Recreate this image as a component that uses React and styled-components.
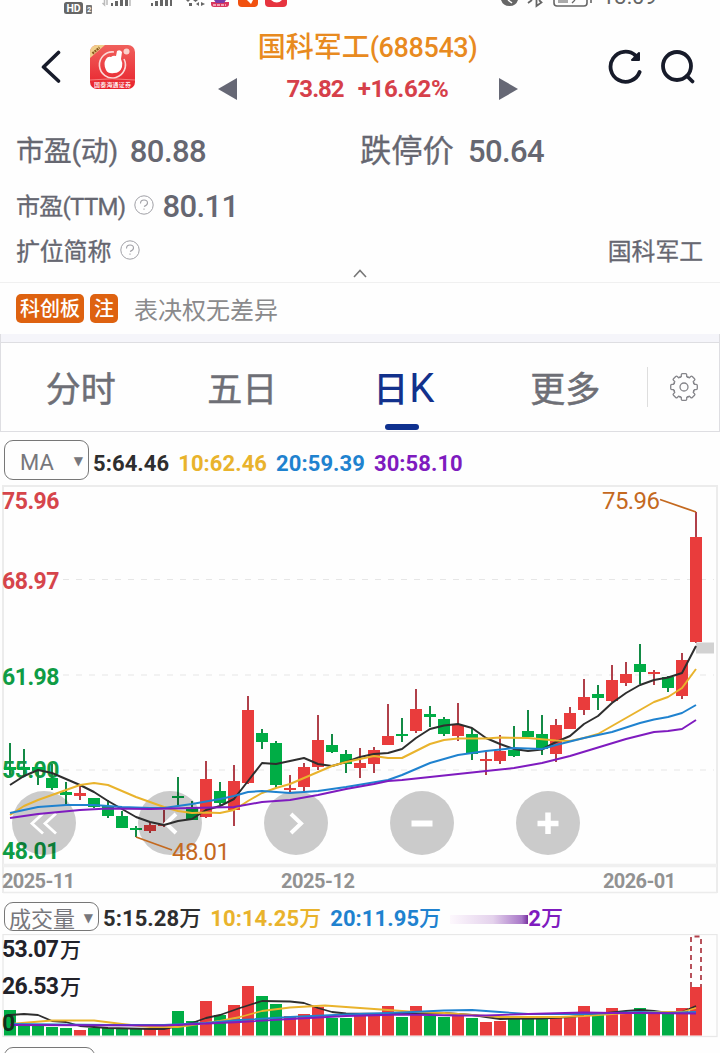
import React from 'react';
import styled, { createGlobalStyle } from 'styled-components';

const RED = '#e93c3c';
const GREEN = '#00ad45';
const WICK_RED = '#b0404a';
const WICK_GREEN = '#138a45';
const MA_COLORS = ['#2e2e2e', '#e9b32c', '#1f82cf', '#7f1bbf'];

// [high, bodyTop, bodyBottom, low, up, volumeTop]
const candles = [
  [743, 767, 770, 775, 0, 1010], [749, 767, 770, 776, 0, 1026], [767, 767, 771, 785, 0, 1026],
  [764, 778, 788, 790, 0, 1027], [782, 792, 795, 805, 0, 1028], [785, 793, 796, 800, 1, 1030],
  [798, 798, 807, 808, 0, 1028], [800, 806, 816, 818, 0, 1028], [811, 816, 828, 828, 0, 1028],
  [826, 828, 830, 837, 0, 1028], [822, 825, 831, 833, 1, 1029], [810, 824, 826, 827, 1, 1028],
  [777, 796, 798, 805, 0, 1011], [801, 807, 820, 820, 0, 1021], [761, 779, 817, 818, 1, 1001],
  [782, 791, 803, 805, 0, 1015], [765, 781, 810, 826, 1, 1005], [696, 710, 783, 784, 1, 986],
  [729, 733, 742, 749, 0, 996], [741, 743, 785, 788, 0, 1004], [775, 788, 790, 792, 1, 1016],
  [763, 767, 787, 791, 1, 1014], [715, 740, 767, 770, 1, 1007], [734, 745, 752, 753, 0, 1018],
  [750, 754, 764, 773, 0, 1018], [748, 763, 768, 778, 1, 1016], [747, 750, 764, 773, 1, 1016],
  [704, 736, 745, 745, 1, 1006], [718, 734, 736, 742, 0, 1017], [689, 709, 731, 733, 1, 1006],
  [706, 714, 717, 727, 0, 1016], [717, 719, 734, 736, 0, 1017], [703, 725, 736, 741, 1, 1015],
  [728, 734, 754, 760, 0, 1018], [752, 759, 761, 775, 1, 1022], [735, 751, 761, 764, 1, 1021],
  [726, 750, 756, 757, 0, 1018], [710, 731, 737, 737, 0, 1018], [715, 734, 749, 755, 0, 1018],
  [719, 725, 754, 762, 1, 1018], [707, 713, 729, 729, 1, 1016], [679, 697, 710, 715, 1, 1006],
  [685, 694, 698, 710, 0, 1014], [665, 680, 701, 702, 1, 1008], [662, 674, 683, 686, 1, 1013],
  [644, 664, 672, 684, 0, 1008], [670, 672, 674, 685, 1, 1013], [676, 677, 688, 692, 0, 1014],
  [653, 660, 696, 699, 1, 1008], [512, 537, 642, 643, 1, 987],
];

const priceLines = [
  '10,785 24,776 38,770 52,773 66,779 80,785 94,792 108,801 122,809 136,817 150,822 164,825 178,821 192,819 206,810 220,806 234,799 248,781 262,763 276,764 290,761 304,758 318,764 332,766 346,762 360,757 374,754 388,753 402,749 416,738 430,729 444,725.5 458,724 472,728 486,738 500,744 514,749 528,751 542,749.5 556,742 570,736 584,724 598,716 612,703 626,693 640,685 654,680 668,677.5 682,673 696,646',
  '10,815 24,806 38,800 52,795 66,790 80,785 94,783 108,785 122,791 136,797 150,802 164,807 178,811 192,813 206,812.5 220,813 234,810 248,801 262,793 276,788 290,784 304,778 318,772 332,766 346,762 360,759 374,756 388,758 402,758 416,751 430,744 444,740 458,738.5 486,738.5 500,737.5 528,738 556,740.5 570,741 584,738 598,734 612,726 626,718 640,710 654,702 668,697 682,688 696,669',
  '10,813 38,807 66,805 94,805 122,807 150,808 164,808 192,804 220,799 234,796 248,792 262,791 290,793 318,791 332,789 346,787 388,780 402,775 430,763 458,755 486,751 514,748 542,749 556,745 584,738 612,732 640,723 654,719.5 668,717 682,713 696,705',
  '10,818 38,814 80,810 108,808.5 150,809 192,808 234,807 262,802 290,800 318,795 346,789 374,784 388,781 402,780 430,777 458,774 486,771 514,768 542,763 570,756 598,747.5 626,739 654,732 668,731 682,729 696,720',
];

const volumeLines = [
  '10,1015 24,1014 38,1015 52,1021 66,1022 80,1026 108,1028 150,1029 164,1029 178,1026 192,1023 206,1018 220,1015 240,1008 262,1001 290,1001.5 304,1003 318,1008 332,1012 346,1013.5 388,1014 416,1013 444,1013 472,1015 486,1017 500,1019 542,1018.5 570,1017 598,1014 626,1011 640,1010 654,1011 668,1013 682,1012 696,1006',
  '10,1024 52,1020.5 94,1020.5 122,1024 150,1027 178,1027 206,1023 220,1021 240,1017 262,1011 290,1007.5 325,1005.5 360,1008 388,1010 416,1012 444,1013 472,1015 500,1017 560,1017 584,1016 612,1014 640,1012 682,1012 696,1008',
  '10,1024 108,1025 164,1025 206,1023 240,1020 290,1017 346,1014.5 402,1012.5 444,1010.5 472,1010 500,1012 528,1014 584,1014 640,1012 668,1013 696,1012',
  '10,1025 164,1025.5 240,1022 290,1019 346,1016 402,1014.5 458,1015.5 486,1015.5 528,1014 584,1012.5 612,1013 640,1013 696,1013.5',
];

const xOf = (i) => 10 + i * 14;

const StatusIcons = () => (
  <svg width="720" height="18" viewBox="0 0 720 18">
    <rect x="64" y="2" width="19" height="12" rx="2.5" fill="#666" />
    <text x="66.5" y="12" fontSize="10.5" fontWeight="700" fill="#fff" fontFamily="Roboto, sans-serif" textLength="14">HD</text>
    <rect x="86" y="5" width="6" height="9" rx="1" fill="#777" />
    <text x="87.2" y="12.2" fontSize="7" fontWeight="700" fill="#fff" fontFamily="Roboto, sans-serif">2</text>
    <g fill="#666">
      <rect x="111" y="3" width="2" height="3" />
      <rect x="115" y="1" width="3" height="5" />
      <rect x="120" y="0" width="3" height="6" />
      <rect x="125" y="0" width="3" height="6" />
      <rect x="151" y="3" width="2" height="3" />
      <rect x="155" y="1" width="3" height="5" />
      <rect x="160" y="0" width="3" height="6" />
      <rect x="165" y="0" width="3" height="6" />
      <rect x="170" y="0" width="2" height="6" />
      <path d="M186 0h4l-2 2zM193 0h5l-2.500 2zM189 3h3v3h-3zM196 4l3-2v4zM201 2l4 2-4 2z" />
    </g>
    <path d="M102.500 3l2 2V0M107 0v5M130 0v6" stroke="#bbb" strokeWidth="1.500" fill="none" />
    <path d="M211 2h18v2q0 3-3 3h-12q-3 0-3-3z" fill="#d9365e" />
    <path d="M214 0h12l-2 3h-8z" fill="#7c3aa6" />
    <path d="M213 5h13" stroke="#f8c2cf" strokeWidth="1.500" strokeDasharray="3 1" />
    <path d="M238 0h20v3q0 4-4 4h-12q-4 0-4-4z" fill="#f1510f" />
    <path d="M247 0h6l-2 4z" fill="#fff" />
    <path d="M265 0h22v3q0 4-4 4h-14q-4 0-4-4z" fill="#e6343f" />
    <path d="M271 0h11q-5 5-11 0z" fill="#fff" />
    <path d="M501 0h17q-2 6-8.500 6T501 0z" fill="#666" />
    <path d="M508 0l4 3" stroke="#fff" strokeWidth="1.500" />
    <path d="M528 3l4-3M536.500 0V6l5-3.500-2.500-2.500" stroke="#666" strokeWidth="1.800" fill="none" />
    <path d="M554 0v3q0 3 3 3h27q3 0 3-3V0M591 0v3" stroke="#666" strokeWidth="1.600" fill="none" />
    <path d="M558 0h10v3h-10z" fill="#aaa" />
    <path d="M572 3l3-3" stroke="#666" strokeWidth="1.200" />
  </svg>
);

const BrokerLogo = () => (
  <svg width="45" height="45" viewBox="0 0 45 45">
    <defs>
      <clipPath id="logoClip"><rect width="45" height="44" rx="7" /></clipPath>
      <linearGradient id="logoFill" x1="0" y1="0" x2="0" y2="1">
        <stop offset="0" stopColor="#f0605c" />
        <stop offset="1" stopColor="#e8202b" />
      </linearGradient>
    </defs>
    <g clipPath="url(#logoClip)">
      <rect width="45" height="45" fill="url(#logoFill)" />
      <path d="M0 0h15L0 13z" fill="#f0cf8b" />
      <path d="M2.500 8.500l7-6" stroke="#8a5a20" strokeWidth="2.400" strokeDasharray="2 .8" />
      <path d="M24 7A13 13 0 1 0 34 14" fill="none" stroke="#fbd8d6" strokeWidth="1.600" />
      <path d="M16 14q2-3 5-2 2-2 5-1l1-5q3-2 5 1l-1 7q2 4 1 8-2 6-8 6-6 1-8-3-3-6 0-11z" fill="#fff" />
      <circle cx="36.500" cy="6.500" r="3" fill="#fbd1cb" />
      <path d="M0 35q22-2.500 45 0" stroke="#f7938f" strokeWidth=".8" fill="none" />
      <text x="4" y="41.500" fontSize="6" fontWeight="500" fill="#fff" fontFamily="'Noto Sans CJK SC', sans-serif" textLength="37">国泰海通证券</text>
    </g>
  </svg>
);

const HelpIcon = () => (
  <svg width="20" height="20" viewBox="0 0 20 20" fill="none" stroke="#a0a0a6">
    <circle cx="10" cy="10" r="9.200" />
    <path d="M6.500 8.500q0-3.500 3.500-3.500t3.500 3q0 2-3.500 3.500M10 13.400v1.300" strokeWidth="1.100" />
  </svg>
);

const gearTeeth = [0, 45, 90, 135, 180, 225, 270, 315];

const GearIcon = () => (
  <svg width="30" height="30" viewBox="-15 -15 30 30" fill="none" stroke="#85858a" strokeWidth="1.300" strokeLinejoin="round" strokeLinecap="round">
    {gearTeeth.map((angle) => (
      <path key={angle} transform={`rotate(${angle})`} d="M-4.300-9.600L-2.700-10.300V-12.200Q-2.700-13.300-1.600-13.300H1.600Q2.700-13.300 2.700-12.200V-10.300L4.300-9.600" />
    ))}
    {gearTeeth.map((angle) => (
      <path key={angle} transform={`rotate(${angle})`} d="M4.300-9.600Q4-9.700 3.750-9.830" />
    ))}
    <circle r="4" />
  </svg>
);

const RoundButton = ({ x, children }) => (
  <g transform={`translate(${x} 823)`}>
    <circle r="32" fill="#000" fillOpacity=".2" />
    <g fill="none" stroke="#fff" strokeWidth="4">{children}</g>
  </g>
);

const PriceChart = () => (
  <ChartSvg width="720" height="409" viewBox="0 485 720 409">
    <path d="M3 893V486H717V893" fill="none" stroke="#ececec" strokeWidth="2" />
    <path d="M3 865.500H717" stroke="#f0f0f0" strokeWidth="3.500" />
    <path d="M3 892.500H717" stroke="#ececec" strokeWidth="1.500" />
    <path d="M63 579.500H714M63 675H714M63 770H714" stroke="#e6e6e6" strokeDasharray="6 7" />
    <AxisText x="2" y="508.500" fill="#d6454b" textLength="57.500">75.96</AxisText>
    <AxisText x="2" y="589" fill="#d6454b" textLength="57.500">68.97</AxisText>
    <AxisText x="2" y="684.500" fill="#0f9c45" textLength="57.500">61.98</AxisText>
    <AxisText x="2" y="778" fill="#0f9c45" textLength="57.500">55.00</AxisText>
    <AxisText x="2" y="859" fill="#0f9c45" textLength="57.500">48.01</AxisText>
    {candles.map(([high, top, bottom, low, up], i) => (
      <g key={i}>
        <path d={`M${xOf(i)} ${high}V${low}`} stroke={up ? WICK_RED : WICK_GREEN} strokeWidth="2" />
        <rect x={xOf(i) - 6} y={top} width="12" height={bottom - top} fill={up ? RED : GREEN} />
      </g>
    ))}
    <rect x="696" y="642.500" width="18" height="11" fill="#d2d2d2" />
    <RoundButton x={44}><path d="M-1-9.500L-12 0.500-1 10.500M12-9.500L1 0.500 12 10.500" strokeWidth="2.800" /></RoundButton>
    <RoundButton x={170}><path d="M6-9L-4 0.500 6 10" /></RoundButton>
    <RoundButton x={296}><path d="M-5-9L5 0.500-5 10" /></RoundButton>
    <RoundButton x={422}><path d="M-10.500 0.500H10.500" strokeWidth="6" /></RoundButton>
    <RoundButton x={548}><path d="M-10.500 0.500H10.500M0-10.500V11" strokeWidth="5.500" /></RoundButton>
    {priceLines.map((points, i) => (
      <polyline key={i} points={points} fill="none" stroke={MA_COLORS[i]} strokeWidth="2" strokeLinejoin="round" />
    ))}
    <path d="M660 499.500L696 512M136 837L172 850" stroke="#c4691f" strokeWidth="1.800" />
    <PeakText x="602" y="509" textLength="58">75.96</PeakText>
    <PeakText x="172" y="859.500" textLength="58">48.01</PeakText>
    <DateText x="2" y="888" textLength="73">2025-11</DateText>
    <DateText x="281" y="888" textLength="74">2025-12</DateText>
    <DateText x="603" y="888" textLength="73">2026-01</DateText>
  </ChartSvg>
);

const VolumeChart = () => (
  <ChartSvg width="720" height="104" viewBox="0 934 720 104">
    <rect x="3" y="934.500" width="714" height="102" fill="none" stroke="#e8e8e8" strokeWidth="1.300" />
    {candles.map((c, i) => (
      <rect key={i} x={xOf(i) - 6} y={c[5]} width="12" height={1035.5 - c[5]} fill={c[4] ? RED : GREEN} />
    ))}
    <path d="M691 987V936.500H701V987" fill="none" stroke="#b0404a" strokeWidth="1.800" strokeDasharray="5 4" />
    {volumeLines.map((points, i) => (
      <polyline key={i} points={points} fill="none" stroke={MA_COLORS[i]} strokeWidth="1.800" strokeLinejoin="round" />
    ))}
    <AxisText x="2" y="957" fill="#22222a" textLength="57">53.07</AxisText>
    <AxisText x="2" y="994" fill="#22222a" textLength="57">26.53</AxisText>
    <UnitText x="60" y="957">万</UnitText>
    <UnitText x="60" y="994">万</UnitText>
    <AxisText x="2" y="1031" fill="#10301c">0</AxisText>
  </ChartSvg>
);

const App = () => (
  <Page>
    <GlobalStyle />
    <StatusBar>
      <StatusIcons />
      <Clock>13:09</Clock>
    </StatusBar>

    <Header>
      <HeaderSide>
        <svg width="20" height="34" viewBox="0 0 20 34" fill="none" stroke="#171b2a" strokeWidth="3.600" strokeLinecap="round" strokeLinejoin="round">
          <path d="M17.500 2.500L2.500 17 17.500 31" />
        </svg>
        <BrokerLogo />
      </HeaderSide>
      <StockPicker>
        <svg width="19" height="22" viewBox="0 0 19 22"><path d="M0 11L19 0V22Z" fill="#666875" /></svg>
        <StockInfo>
          <StockName>国科军工<b>(688543)</b></StockName>
          <StockPrice><Price>73.82</Price><Change>+16.62%</Change></StockPrice>
        </StockInfo>
        <svg width="19" height="22" viewBox="0 0 19 22"><path d="M19 11L0 0V22Z" fill="#666875" /></svg>
      </StockPicker>
      <HeaderActions>
        <svg width="36" height="36" viewBox="0 0 36 36" fill="none" stroke="#171b2a" strokeWidth="3.800" strokeLinecap="round">
          <path d="M31.600 23A15 15 0 1 1 27.500 6.500" />
          <path d="M31 4v7h-7z" fill="#171b2a" strokeWidth="2" strokeLinejoin="round" />
        </svg>
        <svg width="36" height="36" viewBox="0 0 36 36" fill="none" stroke="#171b2a" strokeWidth="3.800" strokeLinecap="round">
          <circle cx="17" cy="17" r="14" />
          <path d="M27 27L32.500 32.500" />
        </svg>
      </HeaderActions>
    </Header>

    <Quotes>
      <QuoteRow $height={56}>
        <QuoteCell>
          <QuoteLabel $size={28} $spacing={-0.3}>市盈(动)</QuoteLabel>
          <QuoteValue $gap={12}>80.88</QuoteValue>
        </QuoteCell>
        <QuoteCell>
          <QuoteLabel $size={31.3}>跌停价</QuoteLabel>
          <QuoteValue $gap={14}>50.64</QuoteValue>
        </QuoteCell>
      </QuoteRow>
      <QuoteRow $height={54}>
        <QuoteCell>
          <QuoteLabel $size={24} $spacing={-0.7}>市盈(TTM)</QuoteLabel>
          <HelpIcon />
          <QuoteValue $gap={8}>80.11</QuoteValue>
        </QuoteCell>
      </QuoteRow>
      <QuoteRow $height={36}>
        <QuoteCell>
          <QuoteLabel $size={24} $spacing={-0.2}>扩位简称</QuoteLabel>
          <HelpIcon />
        </QuoteCell>
        <FullName>国科军工</FullName>
      </QuoteRow>
      <Collapse>
        <svg width="14" height="9" viewBox="0 0 14 9"><path d="M1 8L7 1.500 13 8" fill="none" stroke="#777" strokeWidth="1.600" /></svg>
      </Collapse>
    </Quotes>

    <TagRow>
      <Tag>科创板</Tag>
      <Tag>注</Tag>
      <TagNote>表决权无差异</TagNote>
    </TagRow>

    <Tabs>
      <Tab>分时</Tab>
      <Tab>五日</Tab>
      <Tab $active>日<b>K</b></Tab>
      <Tab>更多</Tab>
      <Settings><GearIcon /></Settings>
    </Tabs>

    <IndicatorRow $height={53}>
      <Select $width={85} $height={40} $pad={15}>MA<Arrow>▼</Arrow></Select>
      <Averages $top={10}>
        <Average $color={MA_COLORS[0]}>5:64.46</Average>
        <Average $color={MA_COLORS[1]}>10:62.46</Average>
        <Average $color={MA_COLORS[2]}>20:59.39</Average>
        <Average $color={MA_COLORS[3]}>30:58.10</Average>
      </Averages>
    </IndicatorRow>
    <PriceChart />

    <IndicatorRow $height={40}>
      <Select $width={95} $height={29} $pad={4}>成交量<Arrow>▼</Arrow></Select>
      <Averages $top={3}>
        <Average $color={MA_COLORS[0]}>5:15.28<i>万</i></Average>
        <Average $color={MA_COLORS[1]}>10:14.25<i>万</i></Average>
        <Average $color={MA_COLORS[2]}>20:11.95<i>万</i></Average>
        <Smudge />
        <Average $color={MA_COLORS[3]}>2<i>万</i></Average>
      </Averages>
    </IndicatorRow>
    <VolumeChart />
    <NextPanel>
      <Select $width={91} $height={40} $pad={15} />
    </NextPanel>
  </Page>
);

// --- STYLES ---

const GlobalStyle = createGlobalStyle`
  * {
    box-sizing: border-box;
  }
  body {
    margin: 0;
    background: #fff;
  }
  svg {
    display: block;
    flex-shrink: 0;
  }
`;

const Page = styled.div`
  width: 720px;
  height: 1053px;
  overflow: hidden;
  background: #fefefe;
  font-family: Roboto, 'Noto Sans CJK SC', sans-serif;
  color: #666771;
`;

const StatusBar = styled.div`
  position: relative;
  height: 20px;
  overflow: hidden;
`;

const Clock = styled.span`
  position: absolute;
  left: 602px;
  top: -15px;
  font-size: 22px;
  line-height: 24px;
  color: #666;
`;

const Header = styled.header`
  display: flex;
  justify-content: space-between;
  height: 104px;
  padding: 0 24px 0 41px;
`;

const HeaderSide = styled.div`
  display: flex;
  align-items: center;
  gap: 29px;
  height: 94px;
`;

const StockPicker = styled.div`
  display: flex;
  align-items: flex-end;
  justify-content: space-between;
  width: 300px;
  height: 80px;
  margin-left: -8px;
`;

const StockInfo = styled.div`
  display: flex;
  flex-direction: column;
  align-items: center;
  height: 67px;
  margin: 0 -10px;
  white-space: nowrap;
`;

const StockName = styled.div`
  font-size: 28px;
  line-height: 30px;
  font-weight: 500;
  color: #e88a20;

  b {
    font-weight: 500;
    font-size: 27px;
    letter-spacing: -0.4px;
  }
`;

const StockPrice = styled.div`
  display: flex;
  gap: 14px;
  margin-top: 12px;
  font-size: 24px;
  line-height: 28px;
  font-weight: 700;
  color: #d6404a;
`;

const Price = styled.span`
  letter-spacing: -1px;
`;

const Change = styled.span`
  letter-spacing: -0.3px;
`;

const HeaderActions = styled.div`
  display: flex;
  align-items: center;
  gap: 16px;
  height: 94px;
`;

const Quotes = styled.section`
  height: 159px;
  border-bottom: 1px solid #f0f0f0;
`;

const QuoteRow = styled.div`
  display: grid;
  grid-template-columns: 344px 1fr;
  align-items: center;
  height: ${(p) => p.$height}px;
  padding: 0 17px 0 16px;
`;

const QuoteCell = styled.div`
  display: flex;
  align-items: center;

  svg {
    margin: -5px 0 0 9px;
  }
`;

const QuoteLabel = styled.span`
  font-size: ${(p) => p.$size}px;
  line-height: 36px;
  letter-spacing: ${(p) => p.$spacing || 0}px;
  -webkit-text-stroke: 0.3px;
`;

const QuoteValue = styled.span`
  margin-left: ${(p) => p.$gap}px;
  font-size: 31px;
  line-height: 36px;
  font-weight: 500;
  letter-spacing: -0.6px;
`;

const FullName = styled.span`
  justify-self: end;
  font-size: 23.8px;
  line-height: 36px;
  -webkit-text-stroke: 0.3px;
`;

const Collapse = styled.div`
  display: flex;
  justify-content: center;
  margin-top: -1px;
`;

const TagRow = styled.div`
  display: flex;
  align-items: center;
  gap: 6px;
  height: 51px;
  padding: 0 16px;
`;

const Tag = styled.span`
  height: 29px;
  padding: 0 4px;
  border-radius: 5px;
  background: #de6210;
  color: #fff;
  font-size: 20px;
  line-height: 31px;
  font-weight: 500;
`;

const TagNote = styled.span`
  margin: 4px 0 0 10px;
  font-size: 24px;
  line-height: 36px;
  color: #8a8a8c;
`;

const Tabs = styled.nav`
  display: flex;
  height: 98px;
  padding-top: 5px;
  border: 1px solid #dedee2;
  border-top: 0;
  box-shadow: inset 0 8px #f5f5fa, inset 0 9px #dedee2;
`;

const Tab = styled.div`
  position: relative;
  width: 161.500px;
  padding: 8px 2px 0 0;
  text-align: center;
  font-size: 35px;
  line-height: 88px;
  font-weight: ${(p) => (p.$active ? 500 : 400)};
  color: ${(p) => (p.$active ? '#12318c' : '#6e6f76')};
  -webkit-text-stroke: ${(p) => (p.$active ? 0 : 0.5)}px;

  b {
    margin-left: 1px;
    font-size: 40px;
    line-height: 40px;
    font-weight: 400;
  }

  &::after {
    content: '';
    display: ${(p) => (p.$active ? 'block' : 'none')};
    position: absolute;
    left: 61px;
    bottom: 1px;
    width: 34px;
    height: 6px;
    border-radius: 3px;
    background: #0f318f;
  }
`;

const Settings = styled.div`
  display: flex;
  align-items: center;
  justify-content: center;
  flex: 1;
  height: 40px;
  margin-top: 28px;
  border-left: 1px solid #dedede;
`;

const IndicatorRow = styled.div`
  display: flex;
  align-items: flex-start;
  height: ${(p) => p.$height}px;
  padding: 8px 0 0 4px;
`;

const Select = styled.div`
  display: flex;
  align-items: center;
  justify-content: space-between;
  flex-shrink: 0;
  width: ${(p) => p.$width}px;
  height: ${(p) => p.$height}px;
  padding: 6px 5px 0 ${(p) => p.$pad}px;
  border: 1px solid #777;
  border-radius: 9px;
  font-size: 22px;
  line-height: 22px;
  color: #77777c;
`;

const Arrow = styled.span`
  font-family: 'DejaVu Sans', sans-serif;
  font-size: 12px;
  line-height: 12px;
  margin-top: -4px;
`;

const Averages = styled.div`
  display: flex;
  align-items: center;
  gap: 9px;
  margin: ${(p) => p.$top}px 0 0 4px;
`;

const Average = styled.span`
  font-size: 22px;
  line-height: 28px;
  font-weight: 700;
  letter-spacing: 0.07px;
  color: ${(p) => p.$color};

  i {
    font-style: normal;
    font-weight: 500;
  }
`;

const Smudge = styled.div`
  width: 78px;
  height: 9px;
  margin-right: -9px;
  background: linear-gradient(90deg, #fdf8fd, #e4d2ec 55%, #a978c8 92%, #7930a0);
`;

const ChartSvg = styled.svg`
  font-family: Roboto, 'Noto Sans CJK SC', sans-serif;
`;

const AxisText = styled.text`
  font-size: 23px;
  font-weight: 700;
`;

const UnitText = styled.text`
  font-size: 21px;
  font-weight: 500;
  fill: #22222a;
`;

const PeakText = styled.text`
  font-size: 24px;
  fill: #c4691f;
`;

const DateText = styled.text`
  font-size: 20px;
  font-weight: 700;
  fill: #929292;
`;

const NextPanel = styled.div`
  padding: 9px 0 0 4px;
`;

export default App;
